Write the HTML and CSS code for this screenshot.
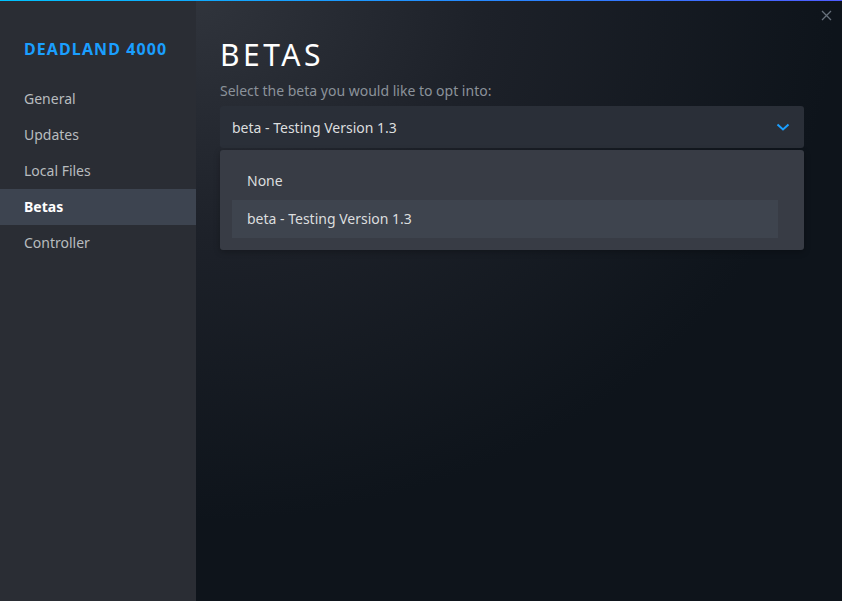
FILE: index.html
```html
<!DOCTYPE html>
<html lang="en">
<head>
    <meta charset="UTF-8">
    <meta name="viewport" content="width=device-width, initial-scale=1.0">
    <title>Properties - DEADLAND 4000</title>
    <link rel="stylesheet" href="styles.css">
</head>
<body>
    <div class="window">
        <!-- Sidebar -->
        <div class="sidebar">
            <div class="game-title">DEADLAND 4000</div>
            <div class="nav">
                <div class="nav-item">General</div>
                <div class="nav-item">Updates</div>
                <div class="nav-item">Local Files</div>
                <div class="nav-item active">Betas</div>
                <div class="nav-item">Controller</div>
            </div>
        </div>

        <!-- Content -->
        <div class="content">
            <h1>BETAS</h1>
            <p class="label">Select the beta you would like to opt into:</p>
            <div class="dropdown">
                <div class="dropdown-value">
                    <span>beta - Testing Version 1.3</span>
                    <svg class="chevron" width="14" height="8" viewBox="0 0 14 8">
                        <path d="M1.5 1.5 L7 6.5 L12.5 1.5" fill="none" stroke="#1a9fff" stroke-width="2"/>
                    </svg>
                </div>
                <div class="dropdown-list">
                    <div class="option">None</div>
                    <div class="option selected">beta - Testing Version 1.3</div>
                </div>
            </div>
        </div>

        <div class="close-btn">
            <svg width="11" height="11" viewBox="0 0 11 11">
                <path d="M1 1 L10 10 M10 1 L1 10" stroke="#67707b" stroke-width="1.3"/>
            </svg>
        </div>
    </div>
</body>
</html>
```

FILE: styles.css
```css
/* Base */
body {
    margin: 0;
    padding: 0;
    font-family: 'Noto Sans', 'Liberation Sans', sans-serif;
    background: #0e141b;
    color: #dcdedf;
    overflow: hidden;
}

.window {
    position: relative;
    display: flex;
    width: 842px;
    height: 601px;
    box-sizing: border-box;
    border-top: 1px solid;
    border-image: linear-gradient(90deg, #00c3ff, #2f7cff 70%, #4f5cff) 1;
    background: radial-gradient(ellipse 640px 520px at 196px 0, #30343c 0%, #1d2129 45%, #0e141b 100%);
}

/* Sidebar */
.sidebar {
    width: 196px;
    flex-shrink: 0;
    background: #2a2d34;
}

.game-title {
    padding: 37px 0 0 24px;
    height: 43px;
    box-sizing: content-box;
    font-size: 16px;
    font-weight: 700;
    letter-spacing: 1.1px;
    color: #1a9fff;
}

.nav-item {
    height: 36px;
    line-height: 36px;
    padding-left: 24px;
    font-size: 14px;
    color: #b8bcbf;
}

.nav-item.active {
    background: #3d4450;
    color: #ffffff;
    font-weight: 700;
}

/* Content */
.content {
    flex: 1;
    padding: 0 38px 0 24px;
}

.content h1 {
    margin: 34px 0 0;
    font-size: 30px;
    font-weight: 400;
    letter-spacing: 3.5px;
    color: #ffffff;
    line-height: 40px;
}

.label {
    margin: 6px 0 5px;
    font-size: 14px;
    color: #8b929a;
    line-height: 20px;
}

.dropdown-value {
    height: 42px;
    padding: 0 14px 0 12px;
    display: flex;
    align-items: center;
    justify-content: space-between;
    background: #2a2f38;
    border-radius: 3px;
    font-size: 14px;
    color: #dcdedf;
}

.dropdown-list {
    margin-top: 2px;
    padding: 12px 26px 12px 12px;
    background: #383c45;
    border-radius: 3px;
    box-shadow: 0 2px 6px rgba(0, 0, 0, 0.25);
}

.option {
    height: 38px;
    line-height: 38px;
    padding-left: 15px;
    font-size: 14px;
    color: #dcdedf;
}

.option.selected {
    background: #3e444e;
}

.close-btn {
    position: absolute;
    top: 3px;
    right: 10px;
}
```
